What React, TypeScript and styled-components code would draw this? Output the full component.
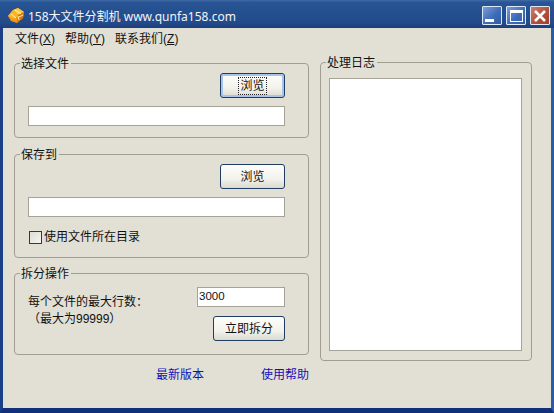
import React from 'react';
import styled, { createGlobalStyle } from 'styled-components';

const GlobalStyle = createGlobalStyle`
  html, body {
    margin: 0;
    padding: 0;
    background: #e2e0d5;
  }
  * {
    box-sizing: border-box;
  }
`;

const FONT = `"Liberation Sans", "Noto Sans CJK SC", sans-serif`;

const Window = styled.div`
  width: 554px;
  height: 413px;
  display: flex;
  flex-direction: column;
  background: #e2e0d5;
  font-family: ${FONT};
  font-size: 12px;
  color: #111;
  overflow: hidden;
`;

const TitleBar = styled.div`
  height: 28px;
  flex: none;
  display: flex;
  align-items: center;
  padding: 3px 4px 0 7px;
  background: linear-gradient(180deg, #3f6ba6 0%, #2a5596 8%, #24508f 40%, #234b8b 80%, #1d3f7c 100%);
  color: #f2f5fa;
`;

const AppIcon = styled.svg`
  width: 18px;
  height: 17px;
  flex: none;
  margin-right: 3px;
`;

const TitleText = styled.span`
  flex: 1;
  font-family: "Noto Sans", "Noto Sans CJK SC", sans-serif;
  font-size: 12px;
  white-space: nowrap;
`;

const WinButton = styled.div<{ $close?: boolean }>`
  width: 20px;
  height: 19px;
  margin-left: 4px;
  border: 1px solid #dfe8f4;
  border-radius: 1px;
  display: flex;
  align-items: center;
  justify-content: center;
  background: ${p =>
    p.$close
      ? 'linear-gradient(135deg, #c98070 0%, #b4503a 55%, #a03f2c 100%)'
      : 'linear-gradient(135deg, #7c9fd6 0%, #3f6cb8 55%, #2f5aa6 100%)'};
`;

const MinBar = styled.span`
  width: 9px;
  height: 3px;
  background: #fff;
  margin: 9px 5px 0 0;
`;

const MaxBox = styled.span`
  width: 13px;
  height: 12px;
  border: 1px solid #fff;
  border-top-width: 3px;
`;

const Frame = styled.div`
  flex: 1;
  min-height: 0;
  display: flex;
  flex-direction: column;
  border-left: 3px solid #1a3f86;
  border-right: 3px solid #2a5ba4;
  border-bottom: 5px solid #12307a;
`;

const MenuBar = styled.div`
  height: 22px;
  flex: none;
  display: flex;
  align-items: center;
  gap: 10px;
  padding: 0 0 3px 12px;
`;

const MenuItem = styled.span`
  font-size: 12px;
  white-space: nowrap;
  u {
    text-underline-offset: 1px;
  }
`;

const Body = styled.div`
  flex: 1;
  display: grid;
  grid-template-columns: 295px 212px;
  column-gap: 11px;
  padding: 5px 0 0 11px;
  align-items: start;
`;

const LeftColumn = styled.div`
  display: flex;
  flex-direction: column;
`;

const Group = styled.fieldset<{ $height: number; $top?: number }>`
  margin: ${p => p.$top ?? 0}px 0 0;
  padding: 0;
  height: ${p => p.$height}px;
  border: 1px solid #a09e90;
  border-radius: 4px;
  min-width: 0;
  position: relative;
`;

const Legend = styled.legend`
  margin-left: 5px;
  padding: 2px 2px 0 1px;
  font-size: 12px;
  line-height: 14px;
  white-space: nowrap;
`;

const GroupBody = styled.div<{ $pt: number }>`
  display: flex;
  flex-direction: column;
  padding: ${p => p.$pt}px 23px 0 13px;
`;

const Browse = styled.button<{ $focused?: boolean; $width?: number }>`
  align-self: flex-end;
  width: ${p => p.$width ?? 65}px;
  height: 25px;
  padding: 0 0 3px;
  font-family: ${FONT};
  font-size: 12px;
  color: #111;
  border: 1px solid #1f3d63;
  border-radius: 3px;
  background: linear-gradient(180deg, #fdfdfb 0%, #f3f2ec 60%, #dcdad0 100%);
  box-shadow: ${p => (p.$focused ? 'inset 0 0 0 2px #a9c4ea' : 'none')};
  span {
    padding: 1px 1px;
    outline: ${p => (p.$focused ? '1px dotted #222' : 'none')};
  }
`;

const TextInput = styled.div<{ $mt?: number }>`
  height: 20px;
  margin-top: ${p => p.$mt ?? 8}px;
  background: #fff;
  border: 1px solid #a5a397;
`;

const CheckRow = styled.label`
  display: flex;
  align-items: center;
  gap: 2px;
  margin: 13px 0 0 1px;
  font-size: 12px;
  line-height: 14px;
`;

const CheckBox = styled.span`
  width: 13px;
  height: 13px;
  border: 1px solid #1f3d63;
  background: linear-gradient(135deg, #dcdcd4 0%, #f6f6f2 100%);
`;

const SplitRow = styled.div`
  display: flex;
  justify-content: space-between;
`;

const SplitNote = styled.div`
  font-size: 12px;
  line-height: 17px;
  padding-top: 7px;
  white-space: pre;
`;

const SplitControls = styled.div`
  display: flex;
  flex-direction: column;
  width: 88px;
`;

const CountInput = styled.div`
  height: 20px;
  background: #fff;
  border: 1px solid #a5a397;
  padding-left: 1px;
  font-size: 11.5px;
  line-height: 17px;
`;

const SplitButton = styled(Browse)`
  margin-top: 9px;
`;

const Links = styled.div`
  display: flex;
  justify-content: flex-end;
  gap: 57px;
  margin-top: 12px;
`;

const LinkText = styled.a`
  color: #1010b8;
  font-size: 12px;
  line-height: 16px;
`;

const LogBody = styled.div`
  padding: 8px 9px 0 8px;
`;

const LogBox = styled.div`
  height: 273px;
  background: #fff;
  border: 1px solid #a5a397;
`;

export default function App() {
  return (
    <Window>
      <GlobalStyle />
      <TitleBar>
        <AppIcon viewBox="0 0 18 17">
          <path d="M1 9 L6 3 L11 1 L17 5 L16 11 L10 16 L4 14 Z" fill="#f29a12" />
          <path d="M6 3 L11 1 L17 5 L11 8 Z" fill="#fcc83c" />
          <path d="M1 9 L6 3 L11 8 L7 12 Z" fill="#fbb426" />
          <path d="M11 8 L17 5 L16 11 L10 16 Z" fill="#d9730c" />
          <path d="M4 7 L9 11 M8 3 L14 7 M12 10 L16 8 M12 13 L11 9" stroke="#fff1b8" strokeWidth="1" fill="none" />
        </AppIcon>
        <TitleText>158大文件分割机 www.qunfa158.com</TitleText>
        <WinButton>
          <MinBar />
        </WinButton>
        <WinButton>
          <MaxBox />
        </WinButton>
        <WinButton $close>
          <svg width="14" height="14" viewBox="0 0 14 14">
            <path d="M2 2 L12 12 M12 2 L2 12" stroke="#fff" strokeWidth="2.6" />
          </svg>
        </WinButton>
      </TitleBar>
      <Frame>
        <MenuBar>
          <MenuItem>文件(<u>X</u>)</MenuItem>
          <MenuItem>帮助(<u>Y</u>)</MenuItem>
          <MenuItem>联系我们(<u>Z</u>)</MenuItem>
        </MenuBar>
        <Body>
          <LeftColumn>
            <Group $height={83}>
              <Legend>选择文件</Legend>
              <GroupBody $pt={2}>
                <Browse $focused><span>浏览</span></Browse>
                <TextInput />
              </GroupBody>
            </Group>
            <Group $height={112} $top={8}>
              <Legend>保存到</Legend>
              <GroupBody $pt={2}>
                <Browse><span>浏览</span></Browse>
                <TextInput />
                <CheckRow>
                  <CheckBox />
                  使用文件所在目录
                </CheckRow>
              </GroupBody>
            </Group>
            <Group $height={90} $top={7}>
              <Legend>拆分操作</Legend>
              <GroupBody $pt={6}>
                <SplitRow>
                  <SplitNote>{'每个文件的最大行数：\n（最大为99999）'}</SplitNote>
                  <SplitControls>
                    <CountInput>3000</CountInput>
                    <SplitButton $width={72}><span>立即拆分</span></SplitButton>
                  </SplitControls>
                </SplitRow>
              </GroupBody>
            </Group>
            <Links>
              <LinkText>最新版本</LinkText>
              <LinkText>使用帮助</LinkText>
            </Links>
          </LeftColumn>
          <Group $height={307} $top={-1}>
            <Legend>处理日志</Legend>
            <LogBody>
              <LogBox />
            </LogBody>
          </Group>
        </Body>
      </Frame>
    </Window>
  );
}
